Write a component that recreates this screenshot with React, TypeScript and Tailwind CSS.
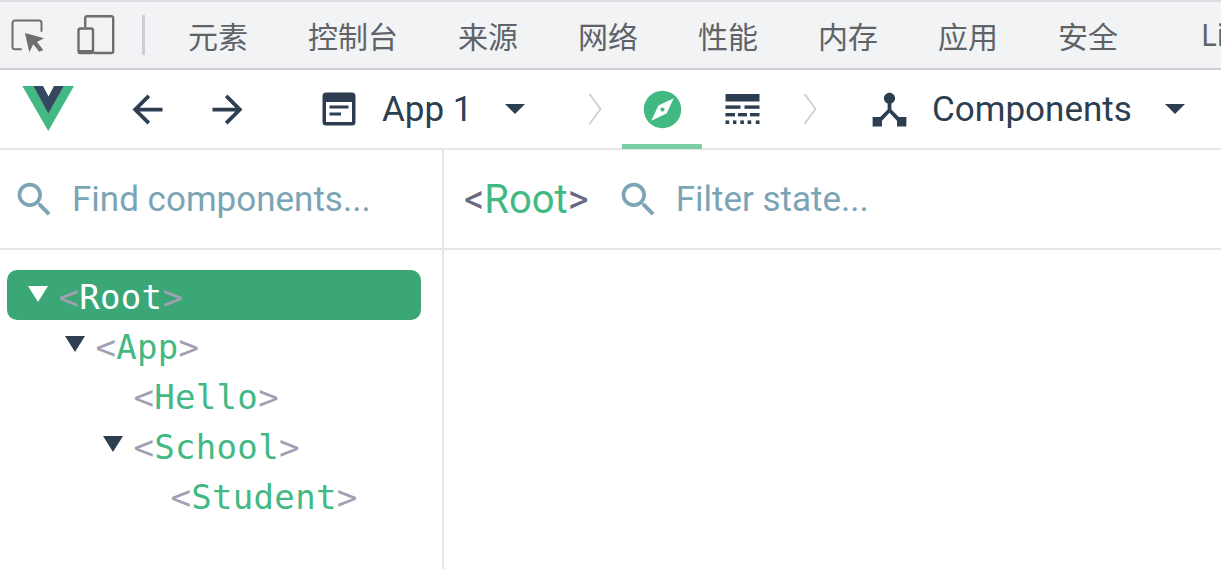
import React from "react";

const tabs = ["元素", "控制台", "来源", "网络", "性能", "内存", "应用", "安全"];

function Row({ name, indent, arrow, selected }: { name: string; indent: string; arrow: boolean; selected?: boolean }) {
  return (
    <div className={`h-[50px] flex items-center rounded-[10px] text-[34px] leading-[50px] font-['DejaVu_Sans_Mono',monospace] tracking-[0.3px] ${indent} ${selected ? "bg-[#3ba776]" : ""}`}>
      <div className="w-[21px] mr-[9.5px] h-[50px] flex items-center justify-start shrink-0">
        {arrow && (
          <div
            className={`w-0 h-0 mb-[1.5px] border-x-[10px] border-x-transparent border-t-[16px] ${selected ? "border-t-white" : "border-t-[#2c3e50]"}`}
          />
        )}
      </div>
      <span className="whitespace-nowrap pt-[4px]">
        <span className="text-[#a0a0b2]">&lt;</span>
        <span className={selected ? "text-white" : "text-[#42b983]"}>{name}</span>
        <span className="text-[#a0a0b2]">&gt;</span>
      </span>
    </div>
  );
}

function Chevron({ className }: { className: string }) {
  return (
    <svg width="14" height="32" viewBox="0 0 14 32" className={className}>
      <path d="M1.5 1 L12.5 16 L1.5 31" fill="none" stroke="#d2d2d2" strokeWidth="2" />
    </svg>
  );
}

function Caret({ className }: { className: string }) {
  return (
    <svg width="20" height="10" viewBox="0 0 20 10" className={className}>
      <polygon points="0,0 20,0 10,10" fill="#2c3e50" />
    </svg>
  );
}

function SearchIcon({ className }: { className: string }) {
  return (
    <svg width="45" height="45" viewBox="0 0 24 24" className={className} fill="#7ba4b5">
      <path d="M15.5 14h-.79l-.28-.27C15.41 12.59 16 11.11 16 9.5 16 5.91 13.09 3 9.5 3S3 5.91 3 9.5 5.91 16 9.5 16c1.61 0 3.09-.59 4.23-1.57l.27.28v.79l5 4.99L20.49 19l-4.99-5zm-6 0C7.01 14 5 11.99 5 9.5S7.01 5 9.5 5 14 7.01 14 9.5 11.99 14 9.5 14z" />
    </svg>
  );
}

export default function App() {
  return (
    <div className="w-[1221px] h-[569px] overflow-hidden flex flex-col bg-white font-['Roboto',sans-serif] text-[#2c3e50]">
      {/* DevTools tabs */}
      <div className="h-[70px] shrink-0 flex items-center bg-[#f1f3f5] border-t-2 border-b-2 border-t-[#dcdde0] border-b-[#cfd0d5] overflow-hidden">
        <svg width="36" height="38" viewBox="0 0 36 38" className="ml-[11px] shrink-0" fill="none">
          <path d="M10.7 33.3H4a2.5 2.5 0 0 1-2.5-2.5V7A2.5 2.5 0 0 1 4 4.5h24A2.5 2.5 0 0 1 30.5 7v8.7" stroke="#6e6e6e" strokeWidth="2" />
          <path d="M14 17 L33 22.3 L26 26 L32.3 34 L28.3 35.7 L22.3 28.3 L18.3 36.3 Z" fill="#6e6e6e" />
        </svg>
        <svg width="40" height="42" viewBox="0 0 40 42" className="ml-[29px] shrink-0" fill="none">
          <path d="M9.2 13V4.2a2 2 0 0 1 2-2h24a2 2 0 0 1 2 2V37a2 2 0 0 1-2 2H18" stroke="#6e6e6e" strokeWidth="2.4" />
          <rect x="2.5" y="14.5" width="14.5" height="24.5" rx="2" stroke="#6e6e6e" strokeWidth="2.4" />
          <rect x="2" y="36" width="15.5" height="4" fill="#6e6e6e" />
        </svg>
        <div className="w-[3px] h-[40px] bg-[#cdced3] ml-[26px] mr-[13px] shrink-0" />
        {tabs.map((t) => (
          <div
            key={t}
            className="px-[30px] text-[30px] leading-[40px] text-[#5f6368] whitespace-nowrap font-['Noto_Sans_CJK_SC',sans-serif] font-normal shrink-0"
          >
            {t}
          </div>
        ))}
        <div className="ml-[53px] text-[30px] leading-[40px] text-[#5f6368] font-['Noto_Sans',sans-serif] shrink-0">Li</div>
      </div>

      {/* Vue toolbar */}
      <div className="h-[80px] shrink-0 flex items-center border-b-2 border-b-[#e4e4ea] relative">
        <svg width="54" height="46" viewBox="0 0 54 46" className="ml-[22px] shrink-0">
          <polygon points="0.3,0 11.3,0 26.3,27 42,0 52,0 26.3,45" fill="#42b983" />
          <polygon points="11.3,0 21,0 26.5,10.5 32,0 42,0 26.3,27.5" fill="#35495e" />
        </svg>
        <svg width="45" height="45" viewBox="0 0 24 24" fill="#2c3e50" className="ml-[49px] shrink-0">
          <path d="M20 11H7.83l5.59-5.59L12 4l-8 8 8 8 1.41-1.41L7.83 13H20v-2z" />
        </svg>
        <svg width="45" height="45" viewBox="0 0 24 24" fill="#2c3e50" className="ml-[35px] shrink-0">
          <path d="M12 4l-1.41 1.41L16.17 11H4v2h12.17l-5.58 5.59L12 20l8-8z" />
        </svg>
        <svg width="34" height="34" viewBox="0 0 34 34" className="ml-[72px] shrink-0">
          <rect x="0.5" y="0.5" width="33" height="33" rx="3.5" fill="#2c3e50" />
          <rect x="4" y="10" width="26" height="20" fill="#fff" />
          <rect x="7.5" y="13.5" width="19" height="3" fill="#2c3e50" />
          <rect x="7.5" y="20.5" width="11.5" height="3" fill="#2c3e50" />
        </svg>
        <span className="ml-[26px] pt-[2px] text-[35px] leading-[50px] w-[123px] shrink-0">App 1</span>
        <Caret className="shrink-0" />
        <Chevron className="ml-[63px] shrink-0" />
        <div className="ml-[20px] w-[80px] h-[78px] relative flex items-center justify-center shrink-0">
          <svg width="45" height="45" viewBox="0 0 24 24" fill="#42b983">
            <path d="M12 10.9c-.61 0-1.1.49-1.1 1.1s.49 1.1 1.1 1.1c.61 0 1.1-.49 1.1-1.1s-.49-1.1-1.1-1.1zM12 2C6.48 2 2 6.48 2 12s4.48 10 10 10 10-4.48 10-10S17.52 2 12 2zm2.19 12.19L6 18l3.81-8.19L18 6l-3.81 8.19z" />
          </svg>
          <div className="absolute left-0 right-0 bottom-[-1px] h-[5px] bg-[#7bcfa5]" />
        </div>
        <svg width="35" height="30" viewBox="0 0 35 30" className="ml-[23px] shrink-0" fill="#2c3e50">
          <rect x="0.5" y="0" width="34" height="7.5" />
          <rect x="0.5" y="11.4" width="15" height="3.4" />
          <rect x="19.5" y="11.4" width="15" height="3.4" />
          <rect x="0.5" y="19" width="9.5" height="3.4" />
          <rect x="13" y="19" width="9" height="3.4" />
          <rect x="25" y="19" width="9.5" height="3.4" />
          <rect x="0.5" y="26.4" width="3.7" height="3.6" />
          <rect x="8" y="26.4" width="3.4" height="3.6" />
          <rect x="15.3" y="26.4" width="3.6" height="3.6" />
          <rect x="22.6" y="26.4" width="3.6" height="3.6" />
          <rect x="30.8" y="26.4" width="3.7" height="3.6" />
        </svg>
        <Chevron className="ml-[43px] shrink-0" />
        <svg width="45" height="45" viewBox="0 0 24 24" fill="#2c3e50" className="ml-[50px] shrink-0">
          <path d="M17 16l-4-4V8.82C14.16 8.4 15 7.3 15 6c0-1.66-1.34-3-3-3S9 4.34 9 6c0 1.3.84 2.4 2 2.82V12l-4 4H3v5h5v-3.05l4-4.2 4 4.2V21h5v-5h-4z" />
        </svg>
        <span className="ml-[20px] pt-[2px] text-[35px] leading-[50px] whitespace-nowrap shrink-0">Components</span>
        <Caret className="ml-[33px] shrink-0" />
      </div>

      {/* Split */}
      <div className="flex-1 flex min-h-0">
        <div className="w-[444px] shrink-0 border-r-2 border-r-[#e4e4ea] flex flex-col">
          <div className="h-[100px] shrink-0 border-b-2 border-b-[#e4e4ea] flex items-center pl-[12px]">
            <SearchIcon className="shrink-0" />
            <span className="ml-[15px] pt-[2px] text-[35px] leading-[50px] text-[#7ba4b5]">Find components...</span>
          </div>
          <div className="pt-[20px] pl-[7px] pr-[21px]">
            <Row name="Root" indent="pl-[21px]" arrow selected />
            <Row name="App" indent="pl-[58px]" arrow />
            <Row name="Hello" indent="pl-[96px]" arrow={false} />
            <Row name="School" indent="pl-[96px]" arrow />
            <Row name="Student" indent="pl-[133px]" arrow={false} />
          </div>
        </div>
        <div className="flex-1 min-w-0">
          <div className="h-[100px] border-b-2 border-b-[#e4e4ea] flex items-center pl-[20px]">
            <span className="pt-[2px] text-[40px] leading-[50px] text-[#666b80]">
              &lt;<span className="text-[#42b983]">Root</span>&gt;
            </span>
            <SearchIcon className="ml-[27px] shrink-0" />
            <span className="ml-[15px] pt-[2px] text-[35px] leading-[50px] text-[#7ba4b5]">Filter state...</span>
          </div>
        </div>
      </div>
    </div>
  );
}
